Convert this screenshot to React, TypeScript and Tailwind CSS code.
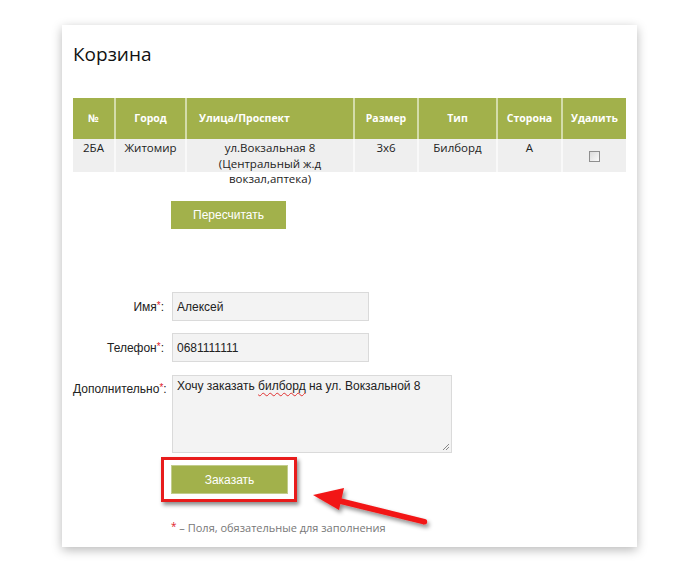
import React from 'react';

const green = 'bg-[#a2b14b]';

const columns = [
  { title: '№', width: 'w-[42px]' },
  { title: 'Город', width: 'w-[71px]' },
  { title: 'Улица/Проспект', width: 'w-[168px]', left: true },
  { title: 'Размер', width: 'w-[64px]' },
  { title: 'Тип', width: 'w-[79px]' },
  { title: 'Сторона', width: 'w-[65px]' },
  { title: 'Удалить', width: 'w-[64px]' },
];

const Star = () => <span className="text-[#e0202a] text-[10px] align-[2px]">*</span>;

const Arrow: React.FC = () => (
  <svg className="absolute left-0 top-0 pointer-events-none" width="700" height="572" viewBox="0 0 700 572">
    <defs>
      <filter id="sh" x="-20%" y="-50%" width="140%" height="200%">
        <feDropShadow dx="2" dy="3" stdDeviation="2" floodColor="#000" floodOpacity="0.45" />
      </filter>
    </defs>
    <g filter="url(#sh)" fill="#f21616">
      <polygon points="313,495 344,488 339,510" />
      <polygon points="338,497.5 340,504 424,524.5 425,519" />
      <circle cx="424.5" cy="521.8" r="2.7" />
    </g>
  </svg>
);

const cell = 'bg-[#efefef] border-l-[2px] border-[#f9f9f9] text-center leading-[16px] pt-[1px]';

export default function App() {
  return (
    <div className="relative w-[700px] h-[572px] bg-white overflow-hidden">
      <div
        className="ml-[62px] mt-[25px] w-[575px] h-[522px] bg-white shadow-[0_3px_10px_rgba(0,0,0,0.28)] pl-[11px] pt-[14px]"
        style={{ fontFamily: '"Open Sans", "Liberation Sans", sans-serif' }}
      >
        <h1 className="text-[19px] leading-[30px] text-[#111]">Корзина</h1>

        <table className="mt-[29px] w-[553px] table-fixed border-collapse text-[11.5px]">
          <colgroup>
            {columns.map((c) => (
              <col key={c.title} className={c.width} />
            ))}
          </colgroup>
          <thead>
            <tr className="h-[41px]">
              {columns.map((c, i) => (
                <th
                  key={c.title}
                  className={`${green} text-white font-bold text-[10.5px] ${
                    i > 0 ? 'border-l-[2px] border-[#d4dcaa]' : ''
                  } ${c.left ? 'text-left pl-[12px]' : 'text-center'}`}
                >
                  {c.title}
                </th>
              ))}
            </tr>
          </thead>
          <tbody>
            <tr className="h-[33px] text-[#222] align-top">
              <td className="bg-[#efefef] text-center leading-[16px] pt-[1px]">2БА</td>
              <td className={cell}>Житомир</td>
              <td className={cell}>
                <div className="h-[31px] leading-[15.5px]">
                  ул.Вокзальная 8
                  <br />
                  (Центральный ж.д
                  <br />
                  вокзал,аптека)
                </div>
              </td>
              <td className={cell}>3x6</td>
              <td className={cell}>Билборд</td>
              <td className={cell}>A</td>
              <td className="bg-[#efefef] border-l-[2px] border-[#f9f9f9] align-middle">
                <div className="mx-auto mt-[1px] w-[11px] h-[11px] border border-[#8f8f8f] bg-gradient-to-br from-[#dcdcdc] to-[#fafafa]" />
              </td>
            </tr>
          </tbody>
        </table>

        <button
          className={`block mt-[29px] ml-[98px] w-[115px] h-[28px] ${green} text-white text-[12px]`}
          style={{ fontFamily: '"Liberation Sans", Arial, sans-serif' }}
        >
          Пересчитать
        </button>

        <div
          className="mt-[63px] flex flex-col text-[12px] text-[#222]"
          style={{ fontFamily: '"Liberation Sans", Arial, sans-serif' }}
        >
          <div className="flex items-center">
            <label className="w-[91px] text-right">
              Имя<Star />:
            </label>
            <input
              readOnly
              defaultValue="Алексей"
              className="ml-[8px] w-[197px] h-[29px] bg-[#f3f3f3] border border-[#dadada] px-[4px] text-[12px] text-[#222] outline-none"
            />
          </div>
          <div className="flex items-center mt-[12px]">
            <label className="w-[91px] text-right">
              Телефон<Star />:
            </label>
            <input
              readOnly
              defaultValue="0681111111"
              className="ml-[8px] w-[197px] h-[29px] bg-[#f3f3f3] border border-[#dadada] px-[4px] text-[12px] text-[#222] outline-none"
            />
          </div>
          <div className="flex items-start mt-[13px]">
            <label className="w-[91px] text-right pt-[5px] whitespace-nowrap">
              Дополнительно<Star />:
            </label>
            <div className="relative ml-[8px] w-[280px] h-[78px] bg-[#f3f3f3] border border-[#dadada] px-[4px] pt-[3px] leading-[15px]">
              Хочу заказать{' '}
              <span className="underline decoration-wavy decoration-[#e03030] decoration-1 underline-offset-2">
                билборд
              </span>{' '}
              на ул. Вокзальной 8
              <svg className="absolute right-[1px] bottom-[1px]" width="8" height="8" viewBox="0 0 8 8">
                <path d="M7 1 L1 7 M7 4 L4 7" stroke="#888" strokeWidth="1" />
              </svg>
            </div>
          </div>

          <div className="mt-[4px] ml-[88px] w-[136px] h-[45px] border-[3px] border-[#e81c1c] shadow-[2px_3px_4px_rgba(0,0,0,0.45)] pl-[7px] pt-[5px]">
            <button className={`w-[117px] h-[29px] ${green} border border-[#c2cc8c] text-white text-[12px]`}>
              Заказать
            </button>
          </div>

          <p
            className="mt-[16px] ml-[98px] leading-[16px] text-[#777] text-[11px]"
            style={{ fontFamily: '"Open Sans", sans-serif' }}
          >
            <Star /> – Поля, обязательные для заполнения
          </p>
        </div>
      </div>
      <Arrow />
    </div>
  );
}
